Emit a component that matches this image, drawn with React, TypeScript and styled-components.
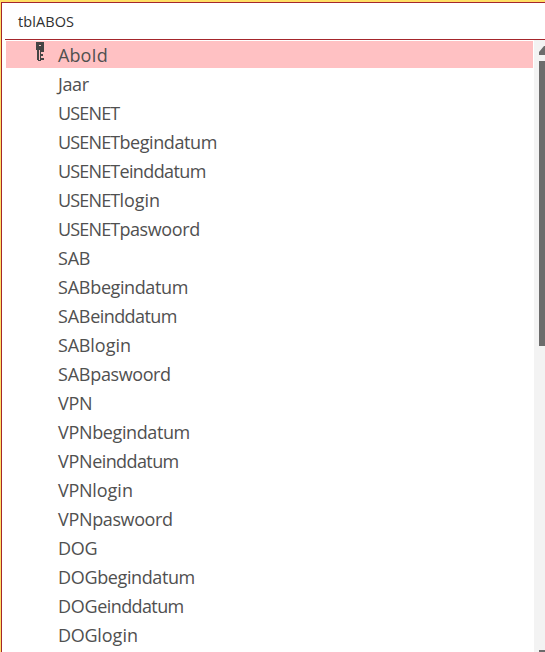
import React from "react";
import styled, { createGlobalStyle } from "styled-components";

const GlobalStyle = createGlobalStyle`
  body { margin: 0; overflow: hidden; background: #fff; }
  * { box-sizing: border-box; }
`;

const Frame = styled.div`
  width: 545px;
  height: 652px;
  overflow: hidden;
  background: #ffdf65;
  padding: 2px 0 0 1px;
  font-family: "Open Sans", "Noto Sans", sans-serif;
`;

const Table = styled.section`
  height: 650px;
  display: flex;
  flex-direction: column;
  background: #fff;
  border-top: 1px solid #a4262c;
  border-left: 1px solid #a4262c;
`;

const Title = styled.header`
  height: 37px;
  margin-left: 3px;
  padding-left: 13px;
  border-bottom: 1px solid #a4262c;
  font-size: 14.5px;
  line-height: 37px;
  letter-spacing: 0.08px;
  color: #303030;
`;

const Body = styled.div`
  flex: 1;
  display: flex;
  justify-content: space-between;
  min-height: 0;
`;

const Fields = styled.ul`
  list-style: none;
  margin: 1px 0 0 4px;
  padding: 0;
  width: 527px;
  display: flex;
  flex-direction: column;
  gap: 2px;
`;

const Field = styled.li<{ $selected: boolean }>`
  flex: none;
  height: 27px;
  display: grid;
  grid-template-columns: 52px 1fr;
  background: ${(p) => (p.$selected ? "#ffc1c3" : "transparent")};
`;

const KeyIcon = styled.svg`
  margin: 1px 0 0 30px;
  display: block;
`;

const Name = styled.span`
  grid-column: 2;
  justify-self: start;
  font-size: 18px;
  line-height: 29px;
  color: #505050;
  white-space: nowrap;
`;

const Part = styled.span<{ $tracking: number }>`
  letter-spacing: ${(p) => p.$tracking}px;
`;

const ScrollBar = styled.div`
  width: 11px;
  background: #f3f3f3;
  padding: 6px 0 0 5px;
  display: flex;
  flex-direction: column;
  overflow: hidden;
`;

const Arrow = styled.svg`
  display: block;
  flex: none;
`;

const Thumb = styled.div`
  height: 285px;
  margin: 6px 0 304px;
  flex: none;
  background: #6c6c6c;
`;

const tracking: Record<string, number> = {
  AboId: 0.1,
  Jaar: -0.4,
  USENET: -0.85,
  SAB: -0.2,
  VPN: -0.3,
  DOG: -0.3,
  begindatum: -0.4,
  einddatum: -0.6,
  login: 0,
  paswoord: -0.4,
};

const fields: string[][] = [
  ["AboId"],
  ["Jaar"],
  ...["USENET", "SAB", "VPN", "DOG"].flatMap((service) => [
    [service],
    [service, "begindatum"],
    [service, "einddatum"],
    [service, "login"],
    [service, "paswoord"],
  ]),
].slice(0, 21);

export default function App() {
  return (
    <>
      <GlobalStyle />
      <Frame>
        <Table>
          <Title>tblABOS</Title>
          <Body>
            <Fields>
              {fields.map((parts, i) => (
                <Field key={parts.join("")} $selected={i === 0}>
                  {i === 0 && (
                    <KeyIcon width="8" height="19" shapeRendering="crispEdges" fill="#444">
                      <path fillRule="evenodd" d="M0 0h8v8H0zM3 3v1h2V3z" />
                      <path d="M1 8h2v10H1zM4 8h1v10H4zM2 18h3v1H2zM5 8h3v2H5zM5 12h2v2H5zM5 16h3v2H5z" />
                    </KeyIcon>
                  )}
                  <Name>
                    {parts.map((part) => (
                      <Part key={part} $tracking={tracking[part]}>{part}</Part>
                    ))}
                  </Name>
                </Field>
              ))}
            </Fields>
            <ScrollBar>
              <Arrow width="6" height="9">
                <path d="M0 9V6L5 0h1v9z" fill="#6c6c6c" />
              </Arrow>
              <Thumb />
              <Arrow width="6" height="8">
                <path d="M0 0h6v8L0 2z" fill="#6c6c6c" />
              </Arrow>
            </ScrollBar>
          </Body>
        </Table>
      </Frame>
    </>
  );
}
